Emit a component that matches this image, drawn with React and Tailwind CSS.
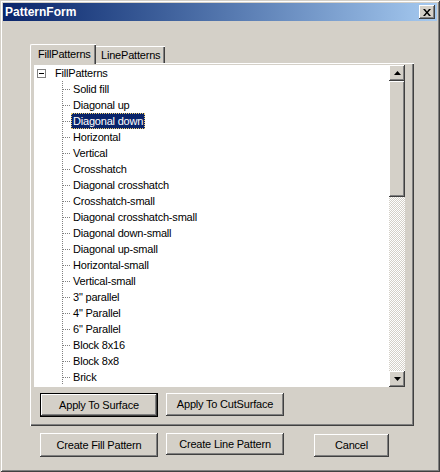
const raised =
  'bg-[#d4d0c8] shadow-[inset_-1px_-1px_#404040,inset_1px_1px_#ffffff,inset_-2px_-2px_#808080,inset_2px_2px_#d4d0c8]';

const items = [
  'Solid fill',
  'Diagonal up',
  'Diagonal down',
  'Horizontal',
  'Vertical',
  'Crosshatch',
  'Diagonal crosshatch',
  'Crosshatch-small',
  'Diagonal crosshatch-small',
  'Diagonal down-small',
  'Diagonal up-small',
  'Horizontal-small',
  'Vertical-small',
  '3" parallel',
  '4" Parallel',
  '6" Parallel',
  'Block 8x16',
  'Block 8x8',
  'Brick',
];

function Button({ label, width, height, isDefault, className = '' }) {
  return (
    <div
      className={`flex items-center justify-center ${raised} ${
        isDefault ? 'border border-black' : ''
      } ${className}`}
      style={{ width, height }}
    >
      <span className="text-[11px] tracking-[-0.2px] text-black leading-none">{label}</span>
    </div>
  );
}

function TreeBranch() {
  return (
    <svg width="9" height="16" className="shrink-0">
      <line x1="0.5" y1="0" x2="0.5" y2="16" stroke="#808080" strokeDasharray="1 1" />
      <line x1="1" y1="8.5" x2="9" y2="8.5" stroke="#808080" strokeDasharray="1 1" />
    </svg>
  );
}

function ScrollArrow({ down }) {
  return (
    <div className={`w-4 h-4 flex items-center justify-center ${raised}`}>
      <svg width="7" height="4" viewBox="0 0 7 4">
        {down ? (
          <path d="M0 0h7L3.5 4z" fill="#000" />
        ) : (
          <path d="M3.5 0L7 4H0z" fill="#000" />
        )}
      </svg>
    </div>
  );
}

function Tree() {
  return (
    <div className="flex w-[371px] h-[322px] bg-white">
      <div className="flex-1 overflow-hidden">
        {/* root node */}
        <div className="flex items-center h-4">
          <div className="w-[3px]" />
          <div className="w-[9px] h-[9px] border border-[#808080] flex items-center justify-center bg-white">
            <div className="w-[5px] h-px bg-black" />
          </div>
          <div className="w-[7px]" />
          <span className="px-[2px] text-[11px] tracking-[-0.2px] leading-4 text-black">FillPatterns</span>
        </div>
        {items.map((name) => {
          const selected = name === 'Diagonal down';
          return (
            <div key={name} className="flex h-4">
              <div className="w-[28px] shrink-0" />
              <TreeBranch />
              <span
                className={`px-[2px] text-[11px] tracking-[-0.2px] leading-4 whitespace-nowrap ${
                  selected
                    ? 'bg-[#0a246a] text-white outline-1 outline-dotted outline-[#f0d070] -outline-offset-1'
                    : 'text-black'
                }`}
              >
                {name}
              </span>
            </div>
          );
        })}
      </div>
      <div className="w-4 flex flex-col">
        <ScrollArrow />
        <div className={`h-[116px] ${raised}`} />
        <div className="flex-1 bg-[repeating-conic-gradient(#d4d0c8_0_25%,#ffffff_0_50%)] bg-[length:2px_2px]" />
        <ScrollArrow down />
      </div>
    </div>
  );
}

export default function App() {
  return (
    <div className="w-[440px] h-[472px] bg-[#d4d0c8] p-[3px] flex flex-col shadow-[inset_1px_1px_#d4d0c8,inset_-1px_-1px_#404040,inset_2px_2px_#ffffff,inset_-2px_-2px_#808080] font-['Liberation_Sans',Arial,sans-serif]">
      {/* title bar */}
      <div className="h-[18px] flex items-center justify-between bg-gradient-to-r from-[#0a246a] to-[#a6caf0] pl-[2px] pr-[2px]">
        <span className="text-white font-bold text-[12px] leading-none">PatternForm</span>
        <div className={`w-4 h-[14px] flex items-center justify-center ${raised}`}>
          <svg width="8" height="7" viewBox="0 0 8 7">
            <path d="M0 0h2l2 2.5L6 0h2L5 3.5 8 7H6L4 4.5 2 7H0l3-3.5z" fill="#000" />
          </svg>
        </div>
      </div>

      <div className="flex flex-col pl-[27px] pt-[23px]">
        {/* tabs */}
        <div className="flex items-end h-[19px]">
          <div className="relative z-10 -mb-px h-[20px] w-[66px] bg-[#d4d0c8] border-t border-l border-white shadow-[inset_-1px_0_#404040,inset_-2px_0_#808080] rounded-tl-[2px] flex items-center pl-[7px]">
            <span className="text-[11px] tracking-[-0.2px] text-black leading-none">FillPatterns</span>
          </div>
          <div className="h-[17px] w-[69px] bg-[#d4d0c8] border-t border-white shadow-[inset_-1px_0_#404040,inset_-2px_0_#808080] flex items-center pl-[5px]">
            <span className="text-[11px] tracking-[-0.2px] text-black leading-none">LinePatterns</span>
          </div>
        </div>

        {/* tab page */}
        <div className="w-[384px] h-[363px] border-t border-l border-white shadow-[inset_-1px_-1px_#404040,inset_-2px_-2px_#808080] pt-px pl-[3px] flex flex-col">
          <Tree />
          <div className="flex gap-2 pl-[6px] pt-[6px]">
            <Button label="Apply To Surface" width={118} height={24} isDefault />
            <Button label="Apply To CutSurface" width={118} height={23} />
          </div>
        </div>

        {/* dialog buttons */}
        <div className="flex items-start pl-[10px] pt-[7px]">
          <Button label="Create Fill Pattern" width={118} height={24} />
          <Button label="Create Line Pattern" width={118} height={22} className="ml-2" />
          <Button label="Cancel" width={75} height={23} className="ml-[30px] mt-px" />
        </div>
      </div>
    </div>
  );
}
